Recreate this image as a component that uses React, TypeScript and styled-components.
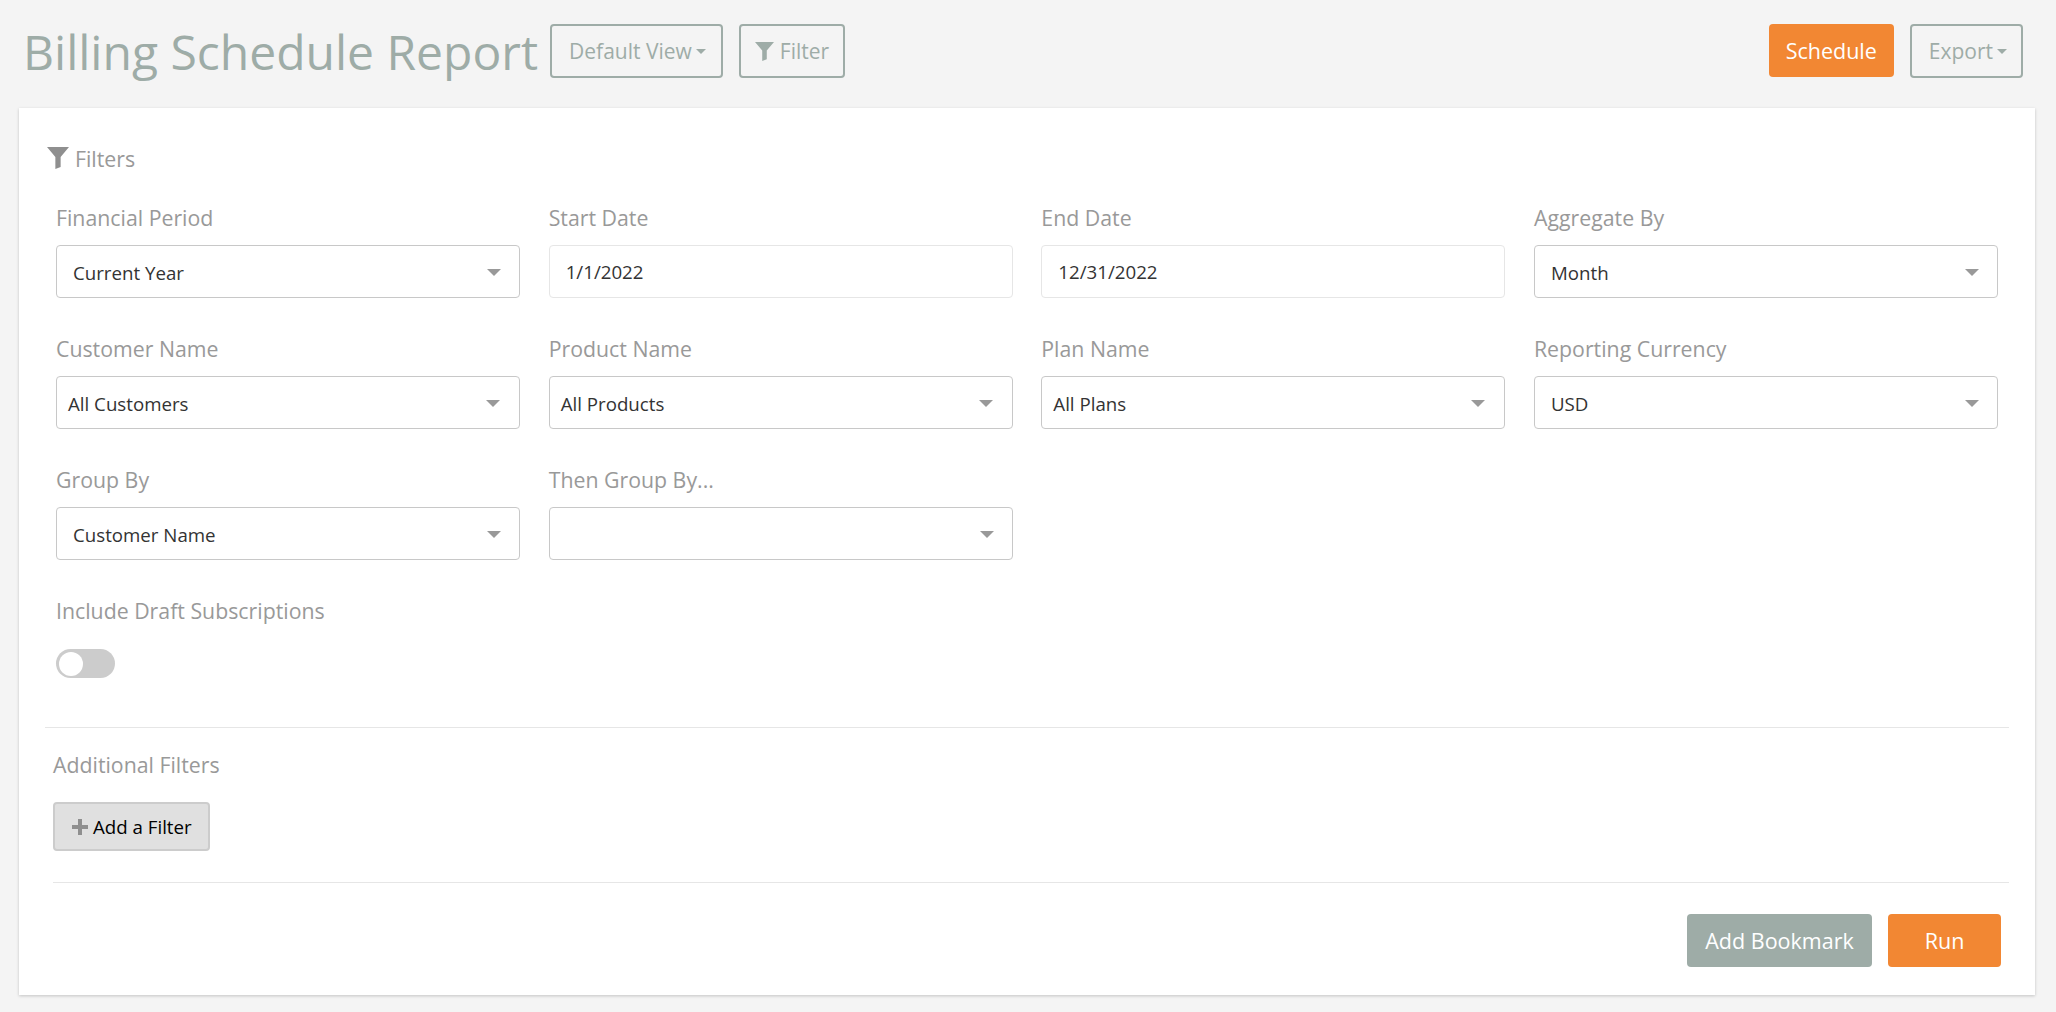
import React from 'react';
import styled, { createGlobalStyle } from 'styled-components';

const GlobalStyle = createGlobalStyle`
  html, body {
    margin: 0;
    padding: 0;
    background: #f4f4f4;
    font-family: "Open Sans", "Liberation Sans", sans-serif;
  }
  * { box-sizing: border-box; }
`;

const Page = styled.div`
  width: 2056px;
  height: 1012px;
  overflow: hidden;
  padding: 24px 21px 0 19px;
`;

const Header = styled.header`
  display: flex;
  align-items: flex-start;
  height: 84px;
  padding: 0 12px 0 4px;
`;

const Title = styled.h1`
  margin: 0 12px 0 0;
  font-size: 48px;
  line-height: 56px;
  font-weight: 400;
  color: #9eaca7;
  white-space: nowrap;
`;

const Spacer = styled.div`
  flex: 1;
`;

const OutlineButton = styled.button<{ $before?: number; $after?: number; $left?: number; $right?: number; $gap?: number }>`
  display: inline-flex;
  align-items: center;
  justify-content: center;
  gap: ${(p) => p.$gap ?? 4}px;
  height: 54px;
  margin: 0 ${(p) => p.$after ?? 0}px 0 ${(p) => p.$before ?? 0}px;
  padding: 0 ${(p) => p.$right ?? 15}px 0 ${(p) => p.$left ?? 17}px;
  background: transparent;
  border: 2px solid #9eaca7;
  border-radius: 4px;
  font: 400 21px "Open Sans", sans-serif;
  color: #9eaca7;
`;

const SolidButton = styled.button<{ $tone: 'orange' | 'grey'; $width: number }>`
  width: ${(p) => p.$width}px;
  height: 53px;
  margin-left: 16px;
  border: 0;
  border-radius: 4px;
  background: ${(p) => (p.$tone === 'orange' ? '#f28733' : '#9eaca7')};
  color: #fff;
  font: 400 21.5px "Open Sans", sans-serif;
`;

const Caret = styled.span<{ $color: string; $size?: number }>`
  display: inline-block;
  width: 0;
  height: 0;
  border-left: ${(p) => p.$size ?? 5}px solid transparent;
  border-right: ${(p) => p.$size ?? 5}px solid transparent;
  border-top: ${(p) => p.$size ?? 5}px solid ${(p) => p.$color};
`;

const Card = styled.main`
  height: 887px;
  padding: 36px 26px 0 26px;
  background: #fff;
  box-shadow: 0 1px 3px rgba(0, 0, 0, 0.2);
`;

const FiltersHeading = styled.div`
  display: flex;
  align-items: center;
  gap: 6px;
  height: 28px;
  margin-bottom: 22px;
  padding-left: 2px;
  font-size: 21.3px;
  color: #999;
`;

const FieldGrid = styled.div`
  display: grid;
  grid-template-columns: repeat(4, 464px);
  column-gap: 28.67px;
  grid-auto-rows: 131px;
  padding-left: 11px;
`;

const Field = styled.div`
  display: flex;
  flex-direction: column;
`;

const Label = styled.label<{ $inset?: number }>`
  height: 28px;
  margin: 10px 0 13px ${(p) => p.$inset ?? 0}px;
  font-size: 21.3px;
  line-height: 28px;
  color: #999;
  white-space: nowrap;
`;

const SelectBox = styled.div<{ $inset?: number }>`
  display: flex;
  align-items: center;
  justify-content: space-between;
  height: 53px;
  padding: 1px ${(p) => (p.$inset === 11 ? 19 : 18)}px 0 ${(p) => p.$inset ?? 16}px;
  background: #fff;
  border: 1px solid #c8c8c8;
  border-radius: 4px;
  font-size: 18.7px;
  color: #333;
`;

const DateBox = styled.div`
  display: flex;
  align-items: center;
  height: 53px;
  padding: 0 16px;
  background: #fff;
  border: 1px solid #e6e6e6;
  border-radius: 4px;
  font-size: 18.7px;
  color: #333;
`;

const Toggle = styled.div`
  position: relative;
  width: 59px;
  height: 29px;
  border-radius: 15px;
  background: #ccc;
`;

const Knob = styled.span`
  position: absolute;
  top: 2.5px;
  left: 2.5px;
  width: 24px;
  height: 24px;
  border-radius: 50%;
  background: #fff;
`;

const ToggleRow = styled.div`
  margin: 11px 0 0 11px;
  height: 78px;
`;

const Divider = styled.hr`
  margin: 0;
  border: 0;
  border-top: 1px solid #e6e6e6;
`;

const SubHeading = styled.div`
  margin: 23px 0 23px 8px;
  height: 28px;
  font-size: 21.3px;
  line-height: 28px;
  color: #999;
`;

const AddFilter = styled.button`
  display: inline-flex;
  align-items: center;
  gap: 5px;
  width: 157px;
  height: 49px;
  margin-left: 8px;
  padding: 0 0 0 17px;
  background: #e0e0e0;
  border: 2px solid #ccc;
  border-radius: 4px;
  font: 400 18.7px "Open Sans", sans-serif;
  color: #000;
`;

const FooterRule = styled(Divider)`
  margin: 31px 0 0 8px;
`;

const Footer = styled.footer`
  display: flex;
  justify-content: flex-end;
  padding: 31px 8px 0 0;
`;

const Funnel = ({ size, color }: { size: number; color: string }) => (
  <svg width={size} height={size} viewBox="0 0 20 20" aria-hidden="true">
    <path d="M0 0H20L12.4 9V18.2L7.6 20V9Z" fill={color} />
  </svg>
);

const Plus = () => (
  <svg width="16" height="16" viewBox="0 0 16 16" aria-hidden="true">
    <path d="M6 0h4v6h6v4h-6v6H6v-6H0V6h6z" fill="#8f8f8f" />
  </svg>
);

type FieldDef =
  | { label: string; kind: 'select'; value: string; inset?: number }
  | { label: string; kind: 'date'; value: string };

const fields: FieldDef[] = [
  { label: 'Financial Period', kind: 'select', value: 'Current Year' },
  { label: 'Start Date', kind: 'date', value: '1/1/2022' },
  { label: 'End Date', kind: 'date', value: '12/31/2022' },
  { label: 'Aggregate By', kind: 'select', value: 'Month' },
  { label: 'Customer Name', kind: 'select', value: 'All Customers', inset: 11 },
  { label: 'Product Name', kind: 'select', value: 'All Products', inset: 11 },
  { label: 'Plan Name', kind: 'select', value: 'All Plans', inset: 11 },
  { label: 'Reporting Currency', kind: 'select', value: 'USD', inset: 16 },
  { label: 'Group By', kind: 'select', value: 'Customer Name' },
  { label: 'Then Group By...', kind: 'select', value: '' },
];

export default function App() {
  return (
    <Page>
      <GlobalStyle />
      <Header>
        <Title>Billing Schedule Report</Title>
        <OutlineButton $after={16}>
          Default View <Caret $color="#9eaca7" $size={5} />
        </OutlineButton>
        <OutlineButton $left={14} $right={14} $gap={6}>
          <Funnel size={19} color="#9eaca7" /> Filter
        </OutlineButton>
        <Spacer />
        <SolidButton $tone="orange" $width={125}>
          Schedule
        </SolidButton>
        <OutlineButton $before={16} $right={14}>
          Export <Caret $color="#9eaca7" $size={5} />
        </OutlineButton>
      </Header>
      <Card>
        <FiltersHeading>
          <Funnel size={22} color="#8f8f8f" /> Filters
        </FiltersHeading>
        <FieldGrid>
          {fields.map((f) => (
            <Field key={f.label}>
              <Label>{f.label}</Label>
              {f.kind === 'select' ? (
                <SelectBox $inset={f.inset}>
                  <span>{f.value}</span>
                  <Caret $color="#999" $size={7} />
                </SelectBox>
              ) : (
                <DateBox>{f.value}</DateBox>
              )}
            </Field>
          ))}
        </FieldGrid>
        <Field>
          <Label $inset={11}>Include Draft Subscriptions</Label>
        </Field>
        <ToggleRow>
          <Toggle>
            <Knob />
          </Toggle>
        </ToggleRow>
        <Divider />
        <SubHeading>Additional Filters</SubHeading>
        <AddFilter>
          <Plus /> Add a Filter
        </AddFilter>
        <FooterRule />
        <Footer>
          <SolidButton $tone="grey" $width={185}>
            Add Bookmark
          </SolidButton>
          <SolidButton $tone="orange" $width={113}>
            Run
          </SolidButton>
        </Footer>
      </Card>
    </Page>
  );
}
